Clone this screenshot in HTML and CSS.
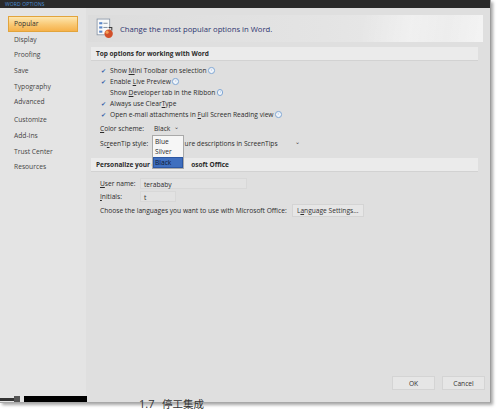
FILE: index.html
```html
<!DOCTYPE html>
<html>
<head>
<meta charset="utf-8">
<link rel="stylesheet" href="styles.css">
</head>
<body>
<div class="page">
  <div class="window">
    <div class="titlebar"><span class="title">WORD OPTIONS</span></div>
    <div class="body">
      <div class="sidebar">
        <div class="nav active">Popular</div>
        <div class="nav">Display</div>
        <div class="nav">Proofing</div>
        <div class="nav">Save</div>
        <div class="nav">Typography</div>
        <div class="nav">Advanced</div>
        <div class="nav gap">Customize</div>
        <div class="nav">Add-Ins</div>
        <div class="nav">Trust Center</div>
        <div class="nav">Resources</div>
      </div>
      <div class="main">
        <div class="banner">
          <svg class="banner-icon" width="21" height="21" viewBox="0 0 20 20">
            <rect x="2" y="1" width="12" height="15" fill="#fafafa" stroke="#8a97a8" stroke-width="0.8"/>
            <rect x="4" y="4" width="3" height="2" fill="#5a86c8"/>
            <line x1="8" y1="5" x2="12" y2="5" stroke="#6d7c90" stroke-width="0.8"/>
            <rect x="4" y="8" width="3" height="2" fill="#5a86c8"/>
            <line x1="8" y1="9" x2="12" y2="9" stroke="#6d7c90" stroke-width="0.8"/>
            <rect x="4" y="12" width="3" height="2" fill="#5a86c8"/>
            <circle cx="13" cy="15" r="4" fill="#d2502a"/>
            <circle cx="11.5" cy="13.5" r="1.5" fill="#f2a15a"/>
            <path d="M13 9 l3 0 l0 3" fill="none" stroke="#3c3c3c" stroke-width="1"/>
          </svg>
          <span class="banner-text">Change the most popular options in Word.</span>
          <div class="banner-art"></div>
        </div>
        <div class="section">Top options for working with Word</div>
        <div class="options top">
          <div class="opt"><span class="chk on">✔</span><span>Show <u>M</u>ini Toolbar on selection</span><span class="info">i</span></div>
          <div class="opt"><span class="chk on">✔</span><span>Enable <u>L</u>ive Preview</span><span class="info">i</span></div>
          <div class="opt"><span class="chk"></span><span>Show <u>D</u>eveloper tab in the Ribbon</span><span class="info">i</span></div>
          <div class="opt"><span class="chk on">✔</span><span>Always use Clear<u>T</u>ype</span></div>
          <div class="opt"><span class="chk on">✔</span><span>Open e-mail attachments in <u>F</u>ull Screen Reading view</span><span class="info">i</span></div>
          <div class="field row-color">
            <span class="label"><u>C</u>olor scheme:</span>
            <span class="select small">Black <span class="arrow">⌄</span></span>
            <div class="popup">
              <div class="pitem">Blue</div>
              <div class="pitem">Silver</div>
              <div class="pitem sel">Black</div>
            </div>
          </div>
          <div class="field">
            <span class="label">Sc<u>r</u>eenTip style:</span>
            <span class="select wide"><span class="hidden-part">Show feat</span>ure descriptions in ScreenTips <span class="arrow">⌄</span></span>
          </div>
        </div>
        <div class="section">Personalize your c<span class="hidden-part">opy of Micr</span>osoft Office</div>
        <div class="options personal">
          <div class="field pfield">
            <span class="label short"><u>U</u>ser name:</span>
            <span class="input name">terababy</span>
          </div>
          <div class="field pfield">
            <span class="label short"><u>I</u>nitials:</span>
            <span class="input init">t</span>
          </div>
          <div class="field lang">
            <span>Choose the languages you want to use with Microsoft Office:</span>
            <span class="btn langbtn">L<u>a</u>nguage Settings...</span>
          </div>
        </div>
        <div class="spacer"></div>
        <div class="footer">
          <span class="btn okbtn">OK</span>
          <span class="btn okbtn">Cancel</span>
        </div>
      </div>
    </div>
  </div>
  <div class="under">
    <span class="bar1"></span><span class="sq"></span><span class="bar2"></span>
    <span class="doc-num">1.7</span>
    <span class="doc-text">停工集成</span>
  </div>
</div>
</body>
</html>
```
FILE: styles.css
```css
html, body {
  margin: 0;
  padding: 0;
  background: #ffffff;
  width: 500px;
  height: 411px;
  overflow: hidden;
  font-family: "Open Sans", "Noto Sans CJK SC", sans-serif;
}
.page {
  position: relative;
  width: 500px;
  height: 411px;
}
.window {
  width: 491px;
  height: 403px;
  display: flex;
  flex-direction: column;
  background: #dfdfdf;
  box-shadow: 2px 2px 3px rgba(0,0,0,0.35);
  border-right: 1px solid #9c9c9c;
  border-bottom: 1px solid #a8a8a8;
  box-sizing: border-box;
}
.titlebar {
  height: 8px;
  background: #2a2a2a;
  display: flex;
  align-items: center;
  padding-left: 5px;
}
.title {
  font-size: 5px;
  color: #4c8fd6;
  letter-spacing: 0.15px;
  line-height: 5px;
}
.body {
  flex: 1;
  display: flex;
}
.sidebar {
  width: 86px;
  background: #e4e4e4;
  padding-top: 8px;
  box-sizing: border-box;
  display: flex;
  flex-direction: column;
}
.nav {
  margin-left: 8px;
  width: 70px;
  height: 15.7px;
  box-sizing: border-box;
  padding-left: 6px;
  font-size: 6.7px;
  line-height: 15.7px;
  color: #454545;
}
.nav.active {
  background: linear-gradient(#fde7b0, #f9c873 55%, #f6b24a);
  border: 1px solid #e2a43c;
  line-height: 13.7px;
  padding-left: 5px;
  color: #303030;
}
.nav.gap {
  margin-top: 2px;
}
.main {
  flex: 1;
  padding: 7px 7px 12px 2px;
  display: flex;
  flex-direction: column;
  color: #2c2c2c;
  font-size: 6.65px;
}
.banner {
  height: 27px;
  display: flex;
  align-items: center;
  padding-left: 7px;
  background: linear-gradient(90deg, #dcdcdc, #e4e4e4 60%, #ececec);
  position: relative;
  overflow: hidden;
}
.banner-icon {
  flex: none;
}
.banner-text {
  margin-left: 4px;
  font-size: 7.7px;
  color: #2e3670;
}
.banner-art {
  position: absolute;
  right: 0;
  top: 0;
  width: 120px;
  height: 27px;
  background: linear-gradient(100deg, rgba(255,255,255,0) 0%, rgba(255,255,255,0.35) 40%, rgba(255,255,255,0.15) 70%, rgba(255,255,255,0.4) 100%);
}
.section {
  margin: 5px 5px 0 3px;
  height: 13px;
  background: #ebebeb;
  border-bottom: 1px solid #d2d2d2;
  font-weight: bold;
  font-size: 6.5px;
  line-height: 13px;
  padding-left: 5px;
  color: #2a2a2a;
}
.options {
  padding: 4px 0 4px 12px;
  display: flex;
  flex-direction: column;
}
.options.top {
  padding-bottom: 1.5px;
}
.options.personal {
  padding-top: 5.5px;
}
.opt {
  height: 11px;
  display: flex;
  align-items: center;
}
.chk {
  width: 6px;
  height: 6px;
  margin-right: 4px;
  font-size: 5.5px;
  line-height: 6px;
  color: #3a63a8;
  text-align: center;
}
.info {
  width: 4.6px;
  height: 4.6px;
  border: 0.6px solid #7fa6d4;
  border-radius: 50%;
  color: #6b93c6;
  font-size: 3.5px;
  line-height: 4.6px;
  text-align: center;
  margin-left: 1.5px;
  background: #f1f5fa;
}
.field {
  display: flex;
  align-items: center;
  height: 15px;
  position: relative;
}
.field.pfield {
  height: 13px;
}
.row-color {
  margin-top: 1px;
}
.label {
  width: 52px;
  flex: none;
}
.label.short {
  width: 40px;
}
.select {
  height: 11px;
  line-height: 11px;
  padding-left: 2px;
  box-sizing: border-box;
  display: flex;
}
.select.small {
  width: 32px;
  justify-content: space-between;
}
.select.wide {
  width: 153px;
}
.hidden-part {
  visibility: hidden;
}
.select.wide .arrow {
  margin-left: auto;
}
.arrow {
  font-size: 6px;
  line-height: 8px;
  padding-right: 5px;
  color: #444;
}
.popup {
  position: absolute;
  left: 52px;
  top: 14px;
  width: 32px;
  background: #f6f6f6;
  border: 1px solid #a9a9a9;
  box-sizing: border-box;
  padding: 1px 0 0 0;
  z-index: 5;
}
.pitem {
  height: 10px;
  line-height: 10px;
  padding-left: 2px;
}
.pitem.sel {
  background: #3f6fbf;
  color: #0f1a33;
  border: 1px solid #2c57a3;
  height: 9px;
  line-height: 9px;
  padding-left: 1px;
}
.input {
  height: 11px;
  line-height: 11px;
  padding-left: 3px;
  box-sizing: border-box;
  border: 1px solid #d8d8d8;
  background: #e2e2e2;
}
.input.name {
  width: 107px;
}
.input.init {
  width: 36px;
}
.field.lang {
  height: 14px;
}
.btn {
  display: inline-flex;
  justify-content: center;
  align-items: center;
  background: #e6e6e6;
  border: 1px solid #d4d4d4;
  box-sizing: border-box;
  color: #333;
}
.langbtn {
  margin-left: 5px;
  width: 72px;
  height: 13px;
}
.spacer {
  flex: 1;
}
.footer {
  display: flex;
  justify-content: flex-end;
  gap: 7px;
  margin-right: -2px;
}
.okbtn {
  width: 43px;
  height: 14px;
}
.under {
  position: absolute;
  left: 0;
  top: 395px;
  width: 500px;
  height: 16px;
  overflow: hidden;
}
.bar1 {
  position: absolute;
  left: 0;
  top: 3px;
  width: 14px;
  height: 3px;
  background: #333;
}
.sq {
  position: absolute;
  left: 14px;
  top: 1px;
  width: 6px;
  height: 6px;
  background: #555;
}
.bar2 {
  position: absolute;
  left: 24px;
  top: 1px;
  width: 63px;
  height: 6px;
  background: #000;
}
.doc-num {
  position: absolute;
  left: 139px;
  top: 3px;
  font-size: 11px;
  line-height: 11px;
  color: #333;
}
.doc-text {
  position: absolute;
  left: 162px;
  top: 3px;
  font-size: 10.5px;
  line-height: 11px;
  color: #333;
  font-family: "Noto Sans CJK SC", sans-serif;
}
```
